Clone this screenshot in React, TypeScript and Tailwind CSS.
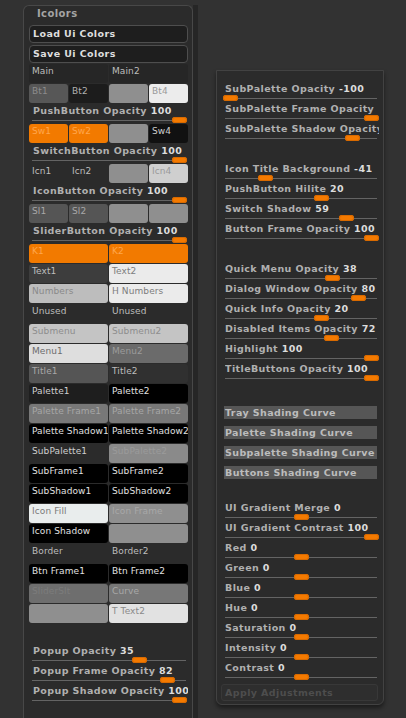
import React from 'react';

type C = [string, string];

const cellBase =
  "h-[19px] rounded-[3px] pl-[3px] pt-[1px] text-[9px] leading-[12px] tracking-[0.1px] overflow-hidden whitespace-nowrap";

function Row({ cells, four }: { cells: C[]; four?: boolean }) {
  return (
    <div className={four ? "h-5 grid grid-cols-4 gap-x-px" : "h-5 grid grid-cols-2 gap-x-px"}>
      {cells.map((c, i) => (
        <div key={i} className={cellBase + " " + c[1]}>
          {c[0]}
        </div>
      ))}
    </div>
  );
}

function Slider({
  label,
  value,
  left,
  track,
  labelCls,
}: {
  label: string;
  value: string;
  left: number;
  track: string;
  labelCls: string;
}) {
  return (
    <div className="h-5 flex flex-col">
      <div
        className={
          "h-[14px] leading-[14px] whitespace-nowrap overflow-hidden text-[9.5px] tracking-[0.4px] font-bold text-[#b0b0b0] " +
          labelCls
        }
      >
        {label} <span className="text-[#dcdcdc]">{value}</span>
      </div>
      <div className={"relative h-[6px] " + track}>
        <div className="mt-[2px] h-px bg-[#646464]" />
        <div
          className="absolute top-[-1px] h-[6px] w-[15px] rounded-[3px] bg-[#f47a00] shadow-[inset_0_0_0_1px_#d86a00]"
          style={{ left }}
        />
      </div>
    </div>
  );
}

const O = "bg-[#f27a00] text-[#ffa64d]";
const G = "bg-[#8f8f8f]";
const K = "bg-[#000000] text-[#e0e0e0]";

const rows2: C[][] = [
  [["K1", O], ["K2", O]],
  [["Text1", "bg-[#3d3d3d] text-[#bdbdbd]"], ["Text2", "bg-[#ebebeb] text-[#7d7d7d]"]],
  [["Numbers", "bg-[#bdbdbd] text-[#8a8a8a]"], ["H Numbers", "bg-[#ebebeb] text-[#7d7d7d]"]],
  [["Unused", "text-[#bdbdbd]"], ["Unused", "text-[#bdbdbd]"]],
  [["Submenu", "bg-[#c4c4c4] text-[#8d8d8d]"], ["Submenu2", "bg-[#c4c4c4] text-[#8d8d8d]"]],
  [["Menu1", "bg-[#dedede] text-[#6d6d6d]"], ["Menu2", "bg-[#6b6b6b] text-[#9b9b9b]"]],
  [["Title1", "bg-[#555555] text-[#a8a8a8]"], ["Title2", "bg-[#303030] text-[#bdbdbd]"]],
  [["Palette1", "bg-[#1e1e1e] text-[#d0d0d0]"], ["Palette2", K]],
  [["Palette Frame1", "bg-[#787878] text-[#a6a6a6]"], ["Palette Frame2", "bg-[#787878] text-[#a6a6a6]"]],
  [["Palette Shadow1", K], ["Palette Shadow2", K]],
  [["SubPalette1", "bg-[#2b2b2b] text-[#cfcfcf]"], ["SubPalette2", "bg-[#8a8a8a] text-[#9a9a9a]"]],
  [["SubFrame1", K], ["SubFrame2", K]],
  [["SubShadow1", K], ["SubShadow2", K]],
  [["Icon Fill", "bg-[#e9eded] text-[#7a7a7a]"], ["Icon Frame", "bg-[#8f8f8f] text-[#a8a8a8]"]],
  [["Icon Shadow", K], ["", G]],
  [["Border", "text-[#bdbdbd]"], ["Border2", "text-[#bdbdbd]"]],
  [["Btn Frame1", K], ["Btn Frame2", K]],
  [["SliderSlt", "bg-[#6e6e6e] text-[#7c7c7c]"], ["Curve", "bg-[#777777] text-[#a8a8a8]"]],
  [["", G], ["T Text2", "bg-[#e2e2e2] text-[#8a8a8a]"]],
];

const LT = "ml-[3px] w-[154px]";
const LL = "pl-[4px]";
const RT = "w-[152px]";

function RS({ l, v, x }: { l: string; v: string; x: number }) {
  return <Slider label={l} value={v} left={x} track={RT} labelCls="" />;
}

function Box({ t }: { t: string }) {
  return (
    <div className="h-5 pt-[3px]">
      <div className="h-[13px] w-[153px] -ml-[1px] bg-[#565656] pl-[1px] text-[9.5px] tracking-[0.4px] leading-[13px] font-bold text-[#bcbcbc] whitespace-nowrap overflow-hidden">
        {t}
      </div>
    </div>
  );
}

export default function App() {
  return (
    <div className="w-[406px] h-[718px] bg-[#323232] overflow-hidden flex items-start font-['DejaVu_Sans',sans-serif]">
      {/* Left panel */}
      <div className="ml-[23px] mt-[5px] w-[170px] h-[713px] rounded-t-[6px] border border-b-0 border-[#484848] bg-[#2b2b2b] flex flex-col">
        <div className="h-[16px] pl-[13px] text-[10px] tracking-[0.4px] leading-[16px] font-bold text-[#a4a4a4]">Icolors</div>
        <div className="pl-[5px] pr-[4px] pt-[3px] flex flex-col">
          <div className="h-[18px] rounded-[4px] border border-[#4e4e4e] bg-[#1e1e1e] pl-[3px] text-[9.5px] tracking-[0.4px] leading-[16px] font-bold text-[#dedede]">
            Load Ui Colors
          </div>
          <div className="mt-[2px] h-[18px] rounded-[4px] border border-[#4e4e4e] bg-[#1e1e1e] pl-[3px] text-[9.5px] tracking-[0.4px] leading-[16px] font-bold text-[#dedede]">
            Save Ui Colors
          </div>
          <div className="mt-[1px]">
            <Row cells={[["Main", "bg-[#262626] text-[#bdbdbd]"], ["Main2", "bg-[#262626] text-[#bdbdbd]"]]} />
            <Row
              four
              cells={[
                ["Bt1", "bg-[#575757] text-[#8c8c8c]"],
                ["Bt2", "bg-[#1c1c1c] text-[#b0b0b0]"],
                ["", G],
                ["Bt4", "bg-[#ececec] text-[#9a9a9a]"],
              ]}
            />
            <Slider label="PushButton Opacity" value="100" left={140} track={LT} labelCls={LL} />
            <Row four cells={[["Sw1", O], ["Sw2", O], ["", G], ["Sw4", "bg-[#111111] text-[#cfcfcf]"]]} />
            <Slider label="SwitchButton Opacity" value="100" left={140} track={LT} labelCls={LL} />
            <Row
              four
              cells={[
                ["Icn1", "text-[#bdbdbd]"],
                ["Icn2", "text-[#bdbdbd]"],
                ["", G],
                ["Icn4", "bg-[#cfcfcf] text-[#9a9a9a]"],
              ]}
            />
            <Slider label="IconButton Opacity" value="100" left={140} track={LT} labelCls={LL} />
            <Row
              four
              cells={[
                ["Sl1", "bg-[#555555] text-[#a8a8a8]"],
                ["Sl2", "bg-[#555555] text-[#a8a8a8]"],
                ["", G],
                ["", G],
              ]}
            />
            <Slider label="SliderButton Opacity" value="100" left={140} track={LT} labelCls={LL} />
            {rows2.map((r, i) => (
              <Row key={i} cells={r} />
            ))}
            <div className="mt-[20px]">
              <Slider label="Popup Opacity" value="35" left={100} track={LT} labelCls={LL} />
              <Slider label="Popup Frame Opacity" value="82" left={128} track={LT} labelCls={LL} />
              <Slider label="Popup Shadow Opacity" value="100" left={140} track={LT} labelCls={LL} />
            </div>
          </div>
        </div>
      </div>
      {/* scroll strip */}
      <div className="mt-[5px] w-[5px] h-[713px] bg-[#262626]" />

      {/* Right panel */}
      <div className="ml-[18px] mt-[70px] w-[168px] h-[635px] rounded-b-[6px] border border-[#424242] bg-[#2b2b2b] shadow-[0_3px_4px_rgba(0,0,0,0.45)] pl-[8px] pr-[4px] pt-[11px] flex flex-col">
        <RS l="SubPalette Opacity" v="-100" x={-2} />
        <RS l="SubPalette Frame Opacity" v="" x={139} />
        <RS l="SubPalette Shadow Opacity" v="" x={120} />
        <div className="mt-[20px]">
          <RS l="Icon Title Background" v="-41" x={33} />
          <RS l="PushButton Hilite" v="20" x={89} />
          <RS l="Switch Shadow" v="59" x={114} />
          <RS l="Button Frame Opacity" v="100" x={139} />
        </div>
        <div className="mt-[20px]">
          <RS l="Quick Menu Opacity" v="38" x={100} />
          <RS l="Dialog Window Opacity" v="80" x={126} />
          <RS l="Quick Info Opacity" v="20" x={89} />
          <RS l="Disabled Items Opacity" v="72" x={99} />
          <RS l="Highlight" v="100" x={139} />
          <RS l="TitleButtons Opacity" v="100" x={139} />
        </div>
        <div className="mt-[21px]">
          <Box t="Tray Shading Curve" />
          <Box t="Palette Shading Curve" />
          <Box t="Subpalette Shading Curve" />
          <Box t="Buttons Shading Curve" />
        </div>
        <div className="mt-[18px]">
          <RS l="UI Gradient Merge" v="0" x={69} />
          <RS l="UI Gradient Contrast" v="100" x={139} />
          <RS l="Red" v="0" x={69} />
          <RS l="Green" v="0" x={69} />
          <RS l="Blue" v="0" x={69} />
          <RS l="Hue" v="0" x={69} />
          <RS l="Saturation" v="0" x={69} />
          <RS l="Intensity" v="0" x={69} />
          <RS l="Contrast" v="0" x={69} />
        </div>
        <div className="mt-[3px] -ml-[4px] w-[157px] h-[17px] rounded-[3px] border border-[#383838] bg-[#2e2e2e] pl-[3px] text-[9.5px] tracking-[0.4px] leading-[15px] font-bold text-[#4d4d4d] whitespace-nowrap overflow-hidden">
          Apply Adjustments
        </div>
      </div>
    </div>
  );
}
